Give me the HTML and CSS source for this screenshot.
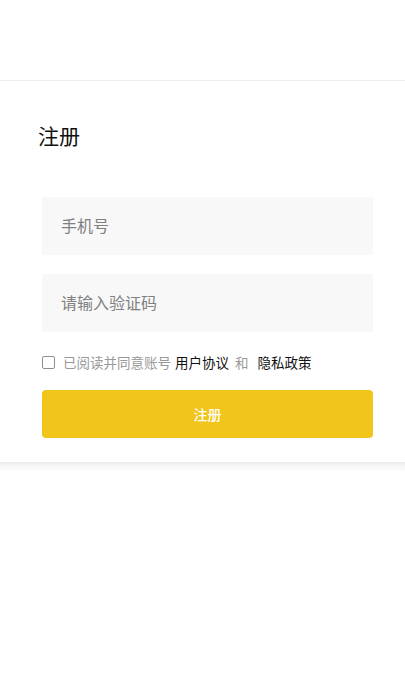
FILE: index.html
```html
<!DOCTYPE html>
<html lang="zh">
<head>
<meta charset="utf-8">
<title>注册</title>
<link rel="stylesheet" href="styles.css">
</head>
<body>
<header class="topbar"></header>
<main class="card">
  <h1 class="title">注册</h1>
  <form class="form">
    <input class="field" type="tel" placeholder="手机号">
    <input class="field" type="text" placeholder="请输入验证码">
    <label class="agree">
      <input class="check" type="checkbox">
      <span class="muted">已阅读并同意账号</span>
      <a class="link link-first">用户协议</a>
      <span class="muted and">和</span>
      <a class="link">隐私政策</a>
    </label>
    <button class="submit" type="button">注册</button>
  </form>
</main>
<div class="card-shadow"></div>
</body>
</html>
```
FILE: styles.css
```css
html, body {
  margin: 0;
  padding: 0;
  background: #fff;
  font-family: "Noto Sans CJK SC", "Noto Sans", sans-serif;
}
.topbar {
  height: 80px;
  border-bottom: 1px solid #eeeeee;
}
.card {
  background: #fff;
  padding: 40px 32px 24px 38px;
}
.card-shadow {
  height: 10px;
  background: linear-gradient(to bottom, #ececec, #f6f6f6 40%, #ffffff);
}
.title {
  margin: 0;
  font-size: 21px;
  line-height: 28px;
  font-weight: 400;
  color: #111;
}
.form {
  margin-top: 48px;
  padding-left: 4px;
  display: flex;
  flex-direction: column;
}
.field {
  height: 58px;
  box-sizing: border-box;
  border: none;
  outline: none;
  background: #f8f8f8;
  padding: 0 19px 3px;
  font-family: inherit;
  font-size: 16px;
  color: #333;
}
.field + .field {
  margin-top: 19px;
}
.field::placeholder {
  color: #808080;
}
.agree {
  margin-top: 20px;
  display: flex;
  align-items: center;
  height: 20px;
  font-size: 13.5px;
  line-height: 20px;
}
.check {
  appearance: none;
  -webkit-appearance: none;
  margin: 0;
  width: 13px;
  height: 13px;
  box-sizing: border-box;
  border: 1px solid #8f8f8f;
  border-radius: 2px;
  background: #fff;
}
.muted {
  color: #999;
}
.check + .muted {
  margin-left: 8px;
}
.link {
  color: #111;
  text-decoration: none;
}
.link-first {
  margin-left: 4px;
}
.and {
  margin: 0 9px 0 6px;
}
.submit {
  margin-top: 18px;
  height: 48px;
  border: none;
  border-radius: 4px;
  background: #f2c51a;
  color: #fff;
  font-family: inherit;
  font-size: 14px;
  font-weight: 500;
}
```
